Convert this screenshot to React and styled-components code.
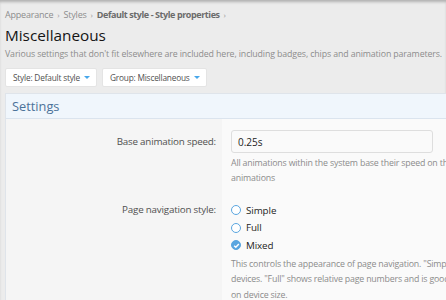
import React from 'react'
import styled, { createGlobalStyle } from 'styled-components'

const Global = createGlobalStyle`
  html, body { margin: 0; padding: 0; }
  body {
    background: #ececec;
    font-family: "Open Sans", "Noto Sans", sans-serif;
    overflow: hidden;
  }
`

const Page = styled.div`
  width: 446px;
  height: 300px;
  position: relative;
  overflow: hidden;
  box-shadow: inset 0 3px 3px -1px rgba(0, 0, 0, 0.25);
`

const Head = styled.div`
  padding: 8px 5px 0 5px;
`

const Crumbs = styled.div`
  display: flex;
  align-items: center;
  gap: 4px;
  font-size: 9px;
  letter-spacing: -0.2px;
  line-height: 14px;
  color: #8c8c8c;
  white-space: nowrap;
`

const Crumb = styled.span`
  font-weight: ${p => (p.$strong ? 700 : 400)};
  letter-spacing: ${p => (p.$strong ? '-0.42px' : '-0.2px')};
  color: ${p => (p.$strong ? '#6b6b6b' : '#8c8c8c')};
`

const Sep = styled.span`
  font-size: 8px;
  color: #9a9a9a;
`

const Title = styled.h1`
  margin: 3px 0 0;
  font-size: 15.3px;
  font-weight: 400;
  color: #141414;
  line-height: 20px;
`

const Desc = styled.p`
  margin: 3px 0 0;
  font-size: 8.8px;
  letter-spacing: -0.12px;
  line-height: 13px;
  color: #8c8c8c;
  white-space: nowrap;
`

const Buttons = styled.div`
  display: flex;
  gap: 5px;
  margin-top: 7px;
`

const Menu = styled.button`
  display: flex;
  align-items: center;
  gap: 4px;
  height: 19px;
  padding: 0 6px 0 7px;
  background: #fff;
  border: 1px solid #e4e4e4;
  border-radius: 2px;
  font-family: inherit;
  font-size: 8.3px;
  letter-spacing: -0.2px;
  color: #505050;
`

const Caret = styled.span`
  width: 0;
  height: 0;
  border-left: 3px solid transparent;
  border-right: 3px solid transparent;
  border-top: 3px solid #47a7eb;
`

const Panel = styled.div`
  margin: 6px -10px 0 5px;
  border: 1px solid #dfe4ea;
  border-right: none;
  background: #fafafa;
`

const PanelHead = styled.div`
  height: 24px;
  display: flex;
  align-items: center;
  padding: 0 6px;
  background: #f0f6fc;
  border-bottom: 1px solid #dbe4ee;
  font-size: 12.8px;
  color: #4c7299;
`

const Row = styled.div`
  display: grid;
  grid-template-columns: 216px 1fr;
`

const Label = styled.div`
  background: #f5f5f5;
  text-align: right;
  padding: ${p => p.$pt} 6px 0 0;
  font-size: 9.8px;
  letter-spacing: -0.2px;
  line-height: 13px;
  color: #505050;
`

const Field = styled.div`
  padding: ${p => p.$pt} 0 ${p => p.$pb} 9px;
  background: #fafafa;
`

const Input = styled.div`
  width: 202px;
  height: 23px;
  box-sizing: border-box;
  display: flex;
  align-items: center;
  padding: 0 6px;
  background: #fafafa;
  border: 1px solid #dedede;
  border-radius: 3px;
  font-size: 10px;
  color: #1d1d1d;
`

const Hint = styled.div`
  margin-top: ${p => p.$mt};
  font-size: 8.8px;
  letter-spacing: -0.18px;
  line-height: ${p => p.$lh};
  color: #8c8c8c;
  white-space: nowrap;
`

const Radios = styled.div`
  display: flex;
  flex-direction: column;
  gap: 3.5px;
`

const RadioRow = styled.label`
  display: flex;
  align-items: center;
  gap: 5px;
  height: 14px;
  font-size: 9.8px;
  letter-spacing: -0.1px;
  color: #1d1d1d;
`

const Dot = styled.span`
  width: 10px;
  height: 10px;
  box-sizing: border-box;
  border-radius: 50%;
  border: 1.5px solid #5aa6e0;
  background: ${p => (p.$on ? '#5aa6e0' : '#fff')};
  display: flex;
  align-items: center;
  justify-content: center;
`

function Radio({ on, children }) {
  return (
    <RadioRow>
      <Dot $on={on}>
        {on && (
          <svg width="7" height="7" viewBox="0 0 8 8">
            <path d="M1.3 4.2 L3.2 6 L6.7 2.2" stroke="#fff" strokeWidth="1.6" fill="none" />
          </svg>
        )}
      </Dot>
      {children}
    </RadioRow>
  )
}

export default function App() {
  return (
    <Page>
      <Global />
      <Head>
        <Crumbs>
          <Crumb>Appearance</Crumb>
          <Sep>›</Sep>
          <Crumb>Styles</Crumb>
          <Sep>›</Sep>
          <Crumb $strong>Default style - Style properties</Crumb>
          <Sep>›</Sep>
        </Crumbs>
        <Title>Miscellaneous</Title>
        <Desc>Various settings that don't fit elsewhere are included here, including badges, chips and animation parameters.</Desc>
        <Buttons>
          <Menu>Style: Default style <Caret /></Menu>
          <Menu>Group: Miscellaneous <Caret /></Menu>
        </Buttons>
      </Head>
      <Panel>
        <PanelHead>Settings</PanelHead>
        <Row>
          <Label $pt="16px">Base animation speed:</Label>
          <Field $pt="11px" $pb="8px">
            <Input>0.25s</Input>
            <Hint $mt="3px" $lh="14.5px">
              All animations within the system base their speed on this value. Set to 0 to disable<br />
              animations
            </Hint>
          </Field>
        </Row>
        <Row>
          <Label $pt="10px">Page navigation style:</Label>
          <Field $pt="10px" $pb="10px">
            <Radios>
              <Radio>Simple</Radio>
              <Radio>Full</Radio>
              <Radio on>Mixed</Radio>
            </Radios>
            <Hint $mt="4.5px" $lh="15.5px">
              This controls the appearance of page navigation. "Simple" is compact and good for small<br />
              devices. "Full" shows relative page numbers and is good for large screens. "Mixed" is based<br />
              on device size.
            </Hint>
          </Field>
        </Row>
      </Panel>
    </Page>
  )
}
